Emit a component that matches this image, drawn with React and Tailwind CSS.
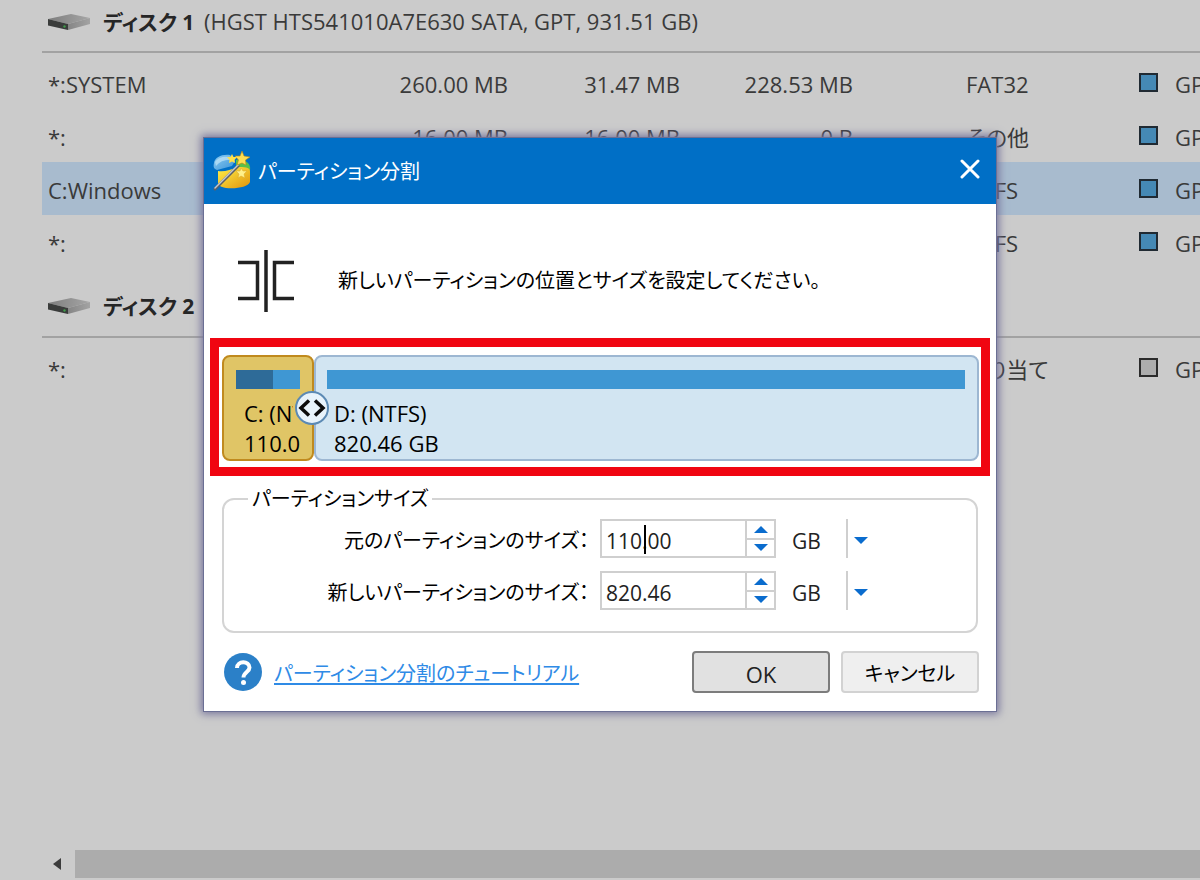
import React from "react";

const disks = [
  {
    name: "ディスク 1",
    detail: "(HGST HTS541010A7E630 SATA, GPT, 931.51 GB)",
    partitions: [
      { name: "*:SYSTEM", size: "260.00 MB", used: "31.47 MB", free: "228.53 MB", fs: "FAT32", type: "GPT" },
      { name: "*:", size: "16.00 MB", used: "16.00 MB", free: "0 B", fs: "その他", type: "GPT" },
      { name: "C:Windows", size: "", used: "", free: "", fs: "NTFS", type: "GPT", selected: true },
      { name: "*:", size: "", used: "", free: "", fs: "NTFS", type: "GPT" },
    ],
  },
  {
    name: "ディスク 2",
    detail: "",
    partitions: [
      { name: "*:", size: "", used: "", free: "", fs: "割り当て", type: "GPT", empty: true },
    ],
  },
];

function DriveIcon() {
  return (
    <svg width="44" height="18" viewBox="0 0 44 18" aria-hidden="true" className="shrink-0">
      <defs>
        <linearGradient id="driveTop" x1="0" y1="0" x2="1" y2="0">
          <stop offset="0" stopColor="#7d7d7d" />
          <stop offset="1" stopColor="#a6a6a6" />
        </linearGradient>
        <linearGradient id="driveSide" x1="0" y1="0" x2="1" y2="0">
          <stop offset="0" stopColor="#858585" />
          <stop offset="1" stopColor="#a3a3a3" />
        </linearGradient>
      </defs>
      <path d="M1 6 24 1 43 5 21 11Z" fill="url(#driveTop)" />
      <path d="M21 11 43 5V11L21 17Z" fill="url(#driveSide)" />
      <path d="M1 6 21 11V17L1 12.500Z" fill="#3a3c3b" />
      <circle cx="17.500" cy="13.500" r="1.200" fill="#3f9b4a" />
    </svg>
  );
}

function WizardIcon() {
  return (
    <svg width="40" height="40" viewBox="0 0 40 40" aria-hidden="true" className="shrink-0">
      <defs>
        <linearGradient id="wizBlue" x1="0" y1="0" x2="1" y2="1">
          <stop offset="0" stopColor="#8fcdf2" />
          <stop offset="1" stopColor="#3a93d8" />
        </linearGradient>
        <linearGradient id="wizGold" x1="0" y1="0" x2="1" y2="1">
          <stop offset="0" stopColor="#fff04a" />
          <stop offset="1" stopColor="#e0930c" />
        </linearGradient>
      </defs>
      <path d="M2 12C3 6 10 3 18 4L23 10 20 15 5 19C2 18 1 16 2 12Z" fill="url(#wizBlue)" />
      <path d="M3 11C6 6 12 5 19 6L21 9C14 8 8 10 4 15Z" fill="#c2e6f8" opacity="0.700" />
      <path d="M24 9C34 8 39 13 38 19L24 22Z" fill="#58c04a" />
      <path d="M6 20C12 21 19 19 25 16C32 16 38 16 38 20V31C36 36 25 38 14 37C8 36 6 34 6 31Z" fill="url(#wizGold)" />
      <path d="M3 38 26 15" stroke="#5b5f66" strokeWidth="3" strokeLinecap="round" />
      <path d="M3 37 26 14" stroke="#c3c7cc" strokeWidth="1.500" strokeLinecap="round" />
      <path d="M30 0 32 5 38 6 33.500 9 34 14 30 12 25 14 26.500 9 23 5 28 5Z" fill="#ffdf52" stroke="#b98414" strokeWidth="0.600" />
      <path d="M20 3 21.500 6 25 6 22.500 9 23 12 20 10.500 17 12 17.500 9 15 6 18.500 6Z" fill="#ffe04a" />
      <path d="M29 17 31 20 35 20 32 23 33 27 29 25 26 27 27 23 24 20 28 20Z" fill="#fff08a" stroke="#d8a72e" strokeWidth="0.500" />
    </svg>
  );
}

function SplitIcon() {
  return (
    <svg width="58" height="64" viewBox="0 0 58 64" fill="none" stroke="#222" strokeWidth="3.500" aria-hidden="true" className="shrink-0">
      <path d="M0 13.500H19.500V49.500H0" />
      <path d="M56 13.500H36.500V49.500H56" />
      <path d="M28 1V63" />
    </svg>
  );
}

function DiskTable() {
  return (
    <table className="w-[1400px] table-fixed border-collapse whitespace-nowrap">
      <colgroup>
        <col className="w-[300px]" />
        <col className="w-[166px]" />
        <col className="w-[172px]" />
        <col className="w-[173px]" />
        <col className="w-[286px]" />
        <col />
      </colgroup>
      {disks.map((disk, i) => (
        <tbody key={disk.name}>
          <tr>
            <th colSpan={6} className="p-0 text-left font-normal">
              <div className={i === 0 ? "mb-[3px] flex h-[53px] items-start border-b-2 border-[#a2a2a2] pt-1" : "mb-[3px] flex h-[70px] items-start border-b-2 border-[#a2a2a2] pt-5"}>
                <div className="flex h-9 items-center gap-3 pl-[5px]">
                  <DriveIcon />
                  <span>
                    <b className="mr-1 text-[21px] text-[#262626]">{disk.name}</b> {disk.detail}
                  </span>
                </div>
              </div>
            </th>
          </tr>
          {disk.partitions.map((p, j) => (
            <tr key={j} className={p.selected ? "h-[53px] bg-[#a8bbce]" : "h-[53px]"}>
              <td className="pt-1 pr-0 pb-0 pl-1.5">{p.name}</td>
              <td className="px-0 pt-1 pb-0 text-right">{p.size}</td>
              <td className="px-0 pt-1 pb-0 text-right">{p.used}</td>
              <td className="px-0 pt-1 pb-0 text-right">{p.free}</td>
              <td className="pt-1 pr-0 pb-0 pl-[113px]">{p.fs}</td>
              <td className="px-0 pt-1 pb-0">
                <div className="flex items-center gap-[17px]">
                  <span className={p.empty ? "mb-1 size-[19px] border-2 border-[#2b2b2b] bg-[#adadad]" : "mb-1 size-[19px] border-2 border-[#202a33] bg-[#4589b5]"} />
                  {p.type}
                </div>
              </td>
            </tr>
          ))}
        </tbody>
      ))}
    </table>
  );
}

function SizeRow({ id, label, value, caret }) {
  return (
    <div className="flex h-[39px] items-center">
      <label htmlFor={id} className="w-[365px] shrink-0 pt-1 text-right text-black">
        {label}
      </label>
      <div className="relative ml-[11px] flex h-[39px] w-44 shrink-0 border-2 border-[#cfcfcf]">
        <input id={id} type="text" defaultValue={value} className="w-full min-w-0 bg-white pt-1.5 pl-1 text-[21px] text-[#222] outline-none" />
        {caret && <span className="absolute top-1 left-[42px] h-[29px] w-0.5 bg-black" />}
        <div className="flex w-[29px] shrink-0 flex-col divide-y-2 divide-[#cfcfcf] border-l-2 border-[#cfcfcf]">
          <button type="button" aria-label={label + " +"} className="flex flex-1 items-center justify-center">
            <svg width="14" height="7" viewBox="0 0 14 7" aria-hidden="true">
              <path d="M0 7 7 0 14 7Z" fill="#0a6cce" />
            </svg>
          </button>
          <button type="button" aria-label={label + " -"} className="flex flex-1 items-center justify-center">
            <svg width="14" height="7" viewBox="0 0 14 7" aria-hidden="true">
              <path d="M0 0 7 7 14 0Z" fill="#0a6cce" />
            </svg>
          </button>
        </div>
      </div>
      <div className="relative ml-4 h-[39px] w-20 shrink-0">
        <select aria-label={label + " GB"} defaultValue="GB" className="h-full w-full appearance-none bg-white pt-1.5 text-[21px] text-[#222] outline-none">
          <option>GB</option>
          <option>MB</option>
        </select>
        <span className="pointer-events-none absolute inset-y-0 right-0 flex w-[26px] items-center border-l-2 border-[#cfcfcf] pt-1 pl-1.5">
          <svg width="14" height="7" viewBox="0 0 14 7" aria-hidden="true">
            <path d="M0 0 7 7 14 0Z" fill="#0a6cce" />
          </svg>
        </span>
      </div>
    </div>
  );
}

function SplitDialog() {
  return (
    <div role="dialog" aria-labelledby="dialog-title" className="w-[792px] bg-white text-black shadow-[0_0_0_1px_#6b6f94,0_0_8px_3px_#77759c]">
      <header className="flex h-[66px] items-center bg-[#006fc6] pr-3.5 pl-2 text-white">
        <WizardIcon />
        <h2 id="dialog-title" className="ml-1.5 flex-1 pt-0.5 text-xl">
          パーティション分割
        </h2>
        <button type="button" aria-label="閉じる" className="flex h-8 w-6 items-start justify-center pt-1">
          <svg width="20" height="20" viewBox="0 0 20 20" stroke="#fff" strokeWidth="3" strokeLinecap="round" aria-hidden="true">
            <path d="M2 2 18 18M18 2 2 18" />
          </svg>
        </button>
      </header>

      <div className="flex h-[134px] items-center gap-[42px] pt-5 pl-[34px]">
        <SplitIcon />
        <p className="text-xl">新しいパーティションの位置とサイズを設定してください。</p>
      </div>

      <div className="mx-1.5 border-[9px] border-[#f00511] pt-2 pr-0.5 pb-1.5 pl-[3px]">
        <div className="relative flex h-[106px] leading-[30px]">
          <div className="w-[92px] shrink-0 rounded-lg border-2 border-[#c08a1e] bg-[#e0c566] px-3 pt-[13px]">
            <div className="flex h-[19px] bg-[#3f97d3]">
              <div className="w-[37px] bg-[#2e6b98]" />
            </div>
            <div className="mt-[9px] ml-2 whitespace-nowrap">
              <div className="w-[49px] overflow-hidden">C: (NTFS)</div>
              <div className="overflow-hidden">110.00 GB</div>
            </div>
          </div>
          <div className="flex-1 rounded-lg border-2 border-[#9db7d2] bg-[#d2e5f2] pt-[13px] pr-3 pl-[11px]">
            <div className="h-[19px] bg-[#3f97d3]" />
            <div className="mt-[9px] ml-[7px]">
              <div>D: (NTFS)</div>
              <div>820.46 GB</div>
            </div>
          </div>
          <button type="button" aria-label="分割位置" className="absolute top-9 left-[73px] flex size-[34px] items-center justify-center rounded-full border-2 border-[#5c8ab4] bg-[#e8f3fb]">
            <svg width="28" height="18" viewBox="0 0 28 18" fill="none" stroke="#0c0c0c" strokeWidth="3.500" aria-hidden="true" className="shrink-0">
              <path d="M11 1.500 3 9 11 16.500M17 1.500 25 9 17 16.500" />
            </svg>
          </button>
        </div>
      </div>

      <fieldset className="relative mx-[18px] mt-[11px] rounded-xl border-2 border-[#d4d4d4] pt-2 pb-[21px]">
        <legend className="ml-6 px-1 text-xl leading-6">パーティションサイズ</legend>
        <div className="flex flex-col gap-[13px] text-xl">
          <SizeRow id="original-size" label="元のパーティションのサイズ：" value="110.00" caret />
          <SizeRow id="new-size" label="新しいパーティションのサイズ：" value="820.46" />
        </div>
      </fieldset>

      <footer className="flex items-center gap-[11px] pt-[18px] pr-[17px] pb-[18px] pl-[19px]">
        <svg width="40" height="40" viewBox="0 0 40 40" aria-hidden="true" className="shrink-0">
          <circle cx="20" cy="20" r="19" fill="#2b80c8" />
          <path d="M14 16C14 8.500 26.500 8.500 26.500 15.500C26.500 20 20.500 20 20.500 25.500" fill="none" stroke="#fff" strokeWidth="4" />
          <circle cx="20.500" cy="30.500" r="2.500" fill="#fff" />
        </svg>
        <div className="flex-1">
          <a href="#tutorial" className="text-xl text-[#2f8be6] underline decoration-2 underline-offset-2">
            パーティション分割のチュートリアル
          </a>
        </div>
        <button type="button" className="h-[42px] w-[138px] rounded-sm border-2 border-[#7c7c7c] bg-[#e1e1e1] pt-1 text-[22px] text-[#222]">
          OK
        </button>
        <button type="button" className="h-[42px] w-[138px] rounded-sm border-2 border-[#d2d2d2] bg-[#efefef] pt-1 text-xl text-black">
          キャンセル
        </button>
      </footer>
    </div>
  );
}

export default function App() {
  return (
    <div className="relative flex min-h-screen flex-col overflow-hidden bg-[#cbcbcb] font-['Open_Sans','Noto_Sans_CJK_JP',sans-serif] text-[22px] text-[#3a3a3a] [font-feature-settings:'palt']">
      <main className="flex-1 overflow-hidden pl-[42px]">
        <DiskTable />
      </main>
      <div className="mb-0.5 flex h-7 items-stretch">
        <button type="button" aria-label="左へスクロール" className="flex w-[75px] items-center justify-end pr-3.5">
          <svg width="8" height="12" viewBox="0 0 8 12" aria-hidden="true">
            <path d="M8 0V12L0 6Z" fill="#3c3c3c" />
          </svg>
        </button>
        <div className="flex-1 bg-[#acacac]" />
      </div>
      <div className="absolute inset-0 flex items-start justify-center pt-[138px]">
        <SplitDialog />
      </div>
    </div>
  );
}
